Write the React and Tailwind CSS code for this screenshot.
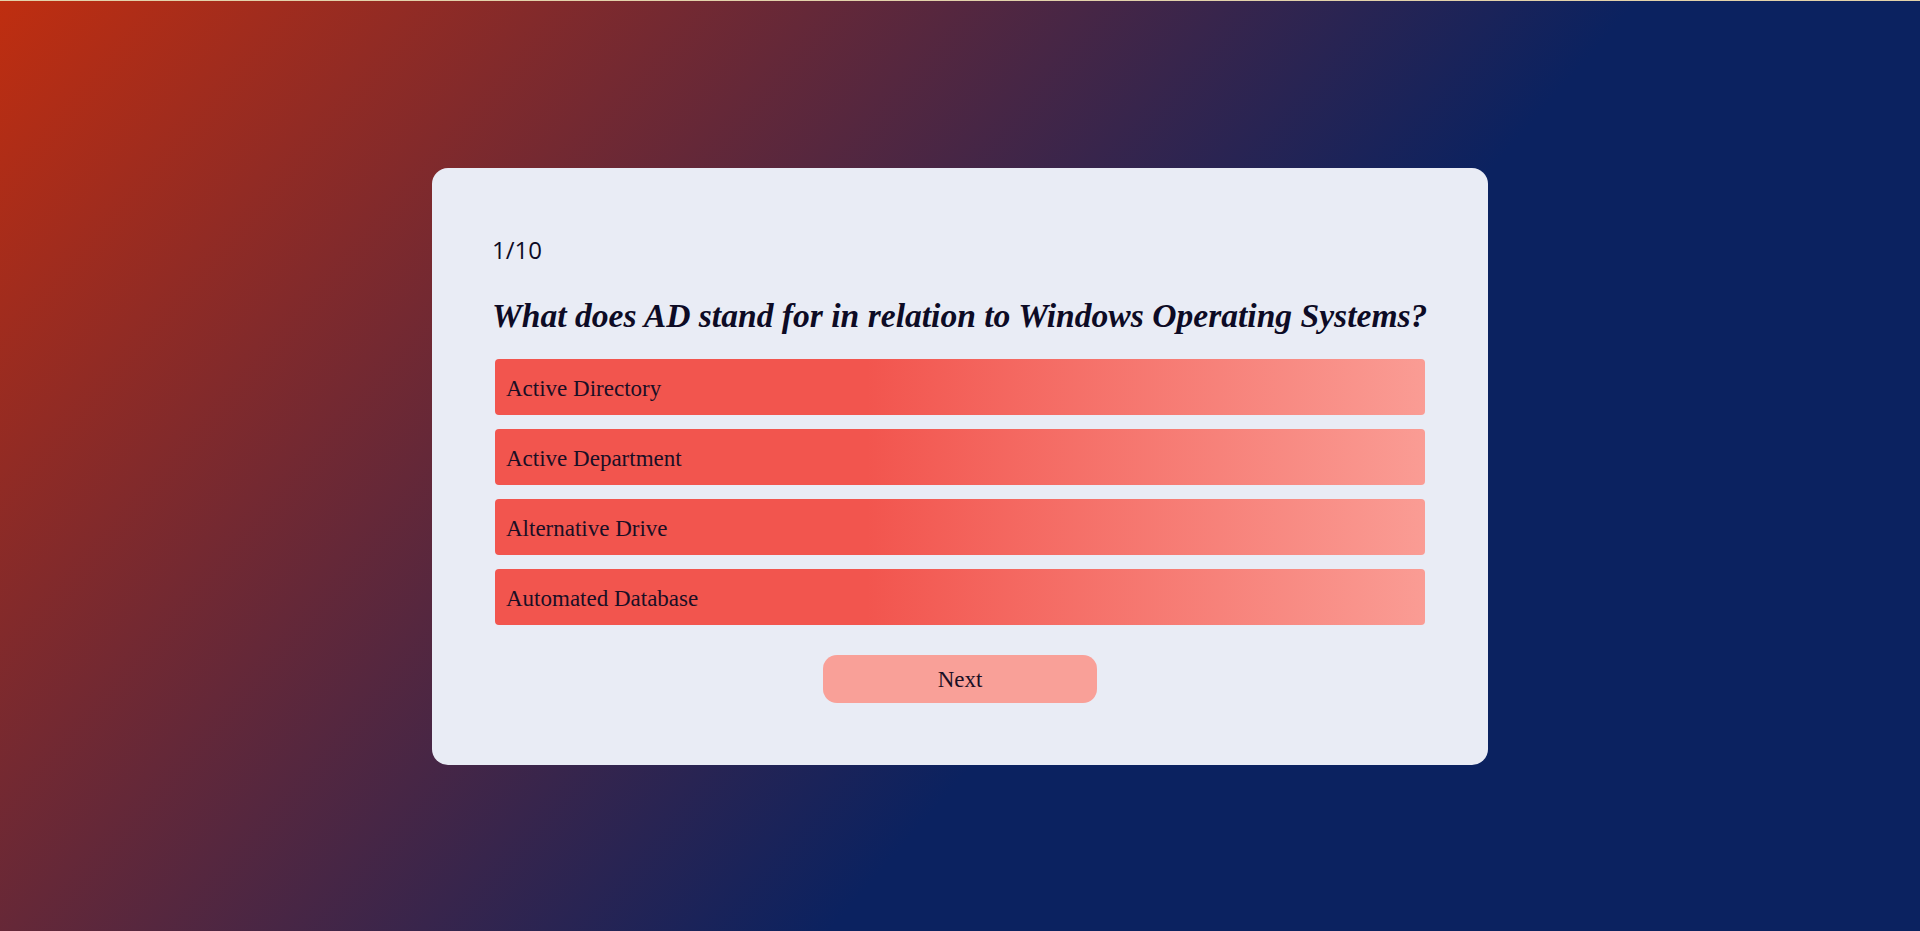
import React from "react";

const quiz = {
  current: 1,
  total: 10,
  question: "What does AD stand for in relation to Windows Operating Systems?",
  answers: [
    "Active Directory",
    "Active Department",
    "Alternative Drive",
    "Automated Database",
  ],
};

export default function App() {
  return (
    <div className="min-h-screen w-full flex items-center justify-center border-t border-[#e3d2aa] bg-[linear-gradient(131deg,#bf2e10_0%,#0b2260_60%,#0b2260_100%)]">
      {/* Quiz Card */}
      <div className="w-[1056px] bg-[#e9ecf5] rounded-2xl px-[60px] pt-[64px] pb-[62px] text-[#0d0b25]">
        <p className="text-[24px] leading-[36px] font-['Open_Sans',sans-serif]">
          {quiz.current}/{quiz.total}
        </p>

        <h1 className="mt-[28px] text-[33.6px] leading-[40px] font-bold italic font-['Liberation_Serif',serif] whitespace-nowrap">
          {quiz.question}
        </h1>

        {/* Answers */}
        <div className="mt-[23px] mx-[3px] flex flex-col gap-[14px]">
          {quiz.answers.map((answer, index) => (
            <button
              key={index}
              className="h-[56px] w-full flex items-center pt-[6px] pl-[11px] rounded-[4px] text-left text-[23px] font-['Liberation_Serif',serif] text-[#1a0f25] bg-[linear-gradient(to_right,#f2554e_40%,#fa9c94_100%)]"
            >
              {answer}
            </button>
          ))}
        </div>

        {/* Next Button */}
        <div className="mt-[30px] flex justify-center">
          <button className="w-[274px] h-[48px] pt-[4px] rounded-[14px] bg-[#f9a098] text-[23px] font-['Liberation_Serif',serif] text-[#1a0f25]">
            Next
          </button>
        </div>
      </div>
    </div>
  );
}
